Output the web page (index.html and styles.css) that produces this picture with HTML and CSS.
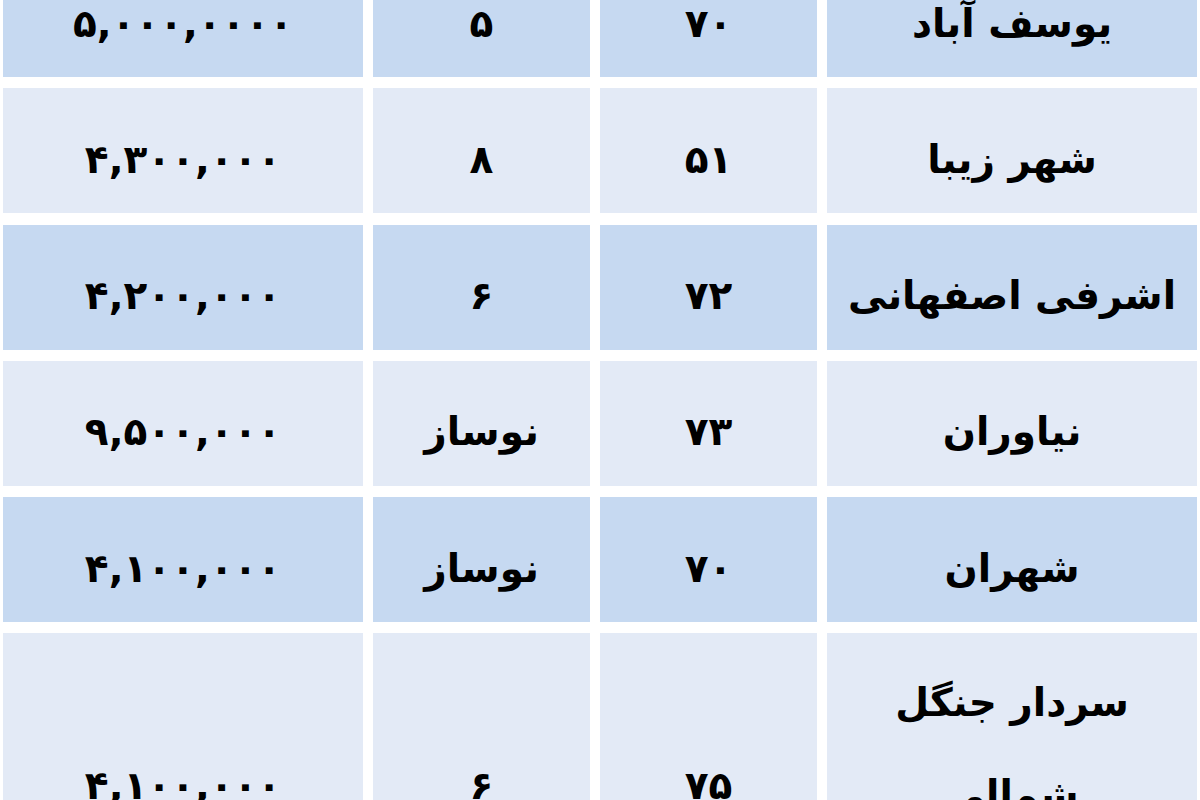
FILE: index.html
```html
<!DOCTYPE html>
<html lang="fa" dir="rtl">
<head>
<meta charset="utf-8">
<title>قیمت مسکن</title>
<link rel="stylesheet" href="styles.css">
</head>
<body>
<div class="table">
  <div class="cell dark">یوسف آباد</div>
  <div class="cell dark">۷۰</div>
  <div class="cell dark">۵</div>
  <div class="cell dark num">۵,۰۰۰,۰۰۰۰</div>

  <div class="cell light">شهر زیبا</div>
  <div class="cell light">۵۱</div>
  <div class="cell light">۸</div>
  <div class="cell light num">۴,۳۰۰,۰۰۰</div>

  <div class="cell dark">اشرفی اصفهانی</div>
  <div class="cell dark">۷۲</div>
  <div class="cell dark">۶</div>
  <div class="cell dark num">۴,۲۰۰,۰۰۰</div>

  <div class="cell light">نیاوران</div>
  <div class="cell light">۷۳</div>
  <div class="cell light">نوساز</div>
  <div class="cell light num">۹,۵۰۰,۰۰۰</div>

  <div class="cell dark">شهران</div>
  <div class="cell dark">۷۰</div>
  <div class="cell dark">نوساز</div>
  <div class="cell dark num">۴,۱۰۰,۰۰۰</div>

  <div class="cell light tall name-tall">سردار جنگل<br>شمالی</div>
  <div class="cell light tall">۷۵</div>
  <div class="cell light tall">۶</div>
  <div class="cell light tall num">۴,۱۰۰,۰۰۰</div>
</div>
</body>
</html>
```
FILE: styles.css
```css
html, body {
  margin: 0;
  padding: 0;
  background: #ffffff;
}

body {
  width: 1200px;
  height: 800px;
  overflow: hidden;
  font-family: "DejaVu Sans", "Noto Sans", sans-serif;
  font-weight: bold;
  color: #000000;
}

.table {
  direction: rtl;
  display: grid;
  grid-template-columns: 370px 217px 217px 360px;
  grid-auto-rows: 125px;
  column-gap: 10px;
  row-gap: 11.25px;
  padding: 0 3px;
  margin-top: -48px;
}

.cell {
  display: flex;
  align-items: center;
  justify-content: center;
  text-align: center;
  font-size: 39px;
  line-height: 80px;
  padding-top: 18px;
  box-sizing: border-box;
}

.num {
  direction: ltr;
  letter-spacing: -0.5px;
}

.dark {
  background: #c6d9f1;
}

.light {
  background: #e3eaf6;
}

.tall {
  height: 300px;
  padding-top: 6px;
}

.name-tall {
  align-items: flex-start;
  line-height: 92px;
  padding-top: 24px;
}
```
